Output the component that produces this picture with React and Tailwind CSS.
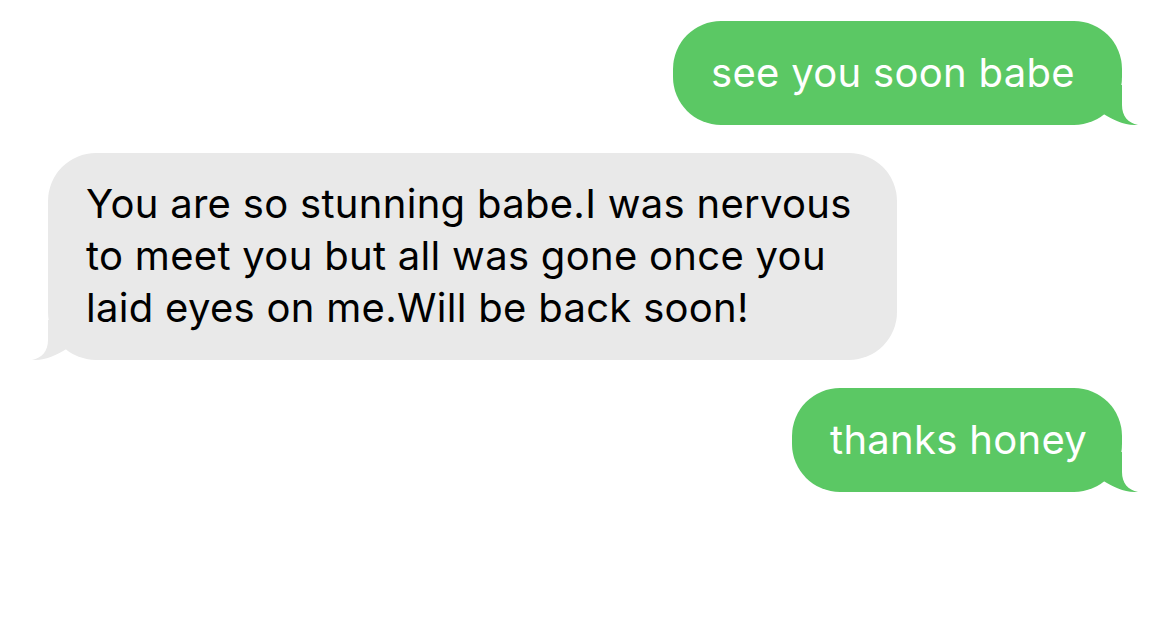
const Tail = ({ color, flip }) => (
  <svg
    width="40"
    height="40"
    viewBox="0 0 40 40"
    className={`absolute bottom-0 ${flip ? "-left-[16px] -scale-x-100" : "-right-[16px]"}`}
  >
    <path d="M4 0 H24 V20 C24 31 30 38 40 40 C28 40.5 16 36 4 28 Z" fill={color} />
  </svg>
);

const Sent = ({ text, width }) => (
  <div className={`relative ${width} h-[104px] rounded-[48px] bg-[#5bc864] pl-[38px] flex items-center`}>
    <span className="relative z-10 text-white text-[40px] leading-[52px] tracking-[0.3px]">{text}</span>
    <Tail color="#5bc864" />
  </div>
);

export default function App() {
  return (
    <div
      className="w-full h-[631px] bg-white flex flex-col px-[48px] pt-[21px]"
      style={{ fontFamily: "Inter, 'Liberation Sans', sans-serif" }}
    >
      <div className="flex justify-end">
        <Sent text="see you soon babe" width="w-[449px]" />
      </div>
      <div className="flex justify-start mt-[28px]">
        <div className="relative w-[849px] h-[207px] rounded-[48px] bg-[#e9e9e9] pl-[38px] pt-[25px]">
          <p className="relative z-10 text-black text-[40px] leading-[52px] tracking-[0.3px]">
            You are so stunning babe.I was nervous
            <br />
            to meet you but all was gone once you
            <br />
            laid eyes on me.Will be back soon!
          </p>
          <Tail color="#e9e9e9" flip />
        </div>
      </div>
      <div className="flex justify-end mt-[28px]">
        <Sent text="thanks honey" width="w-[330px]" />
      </div>
    </div>
  );
}
